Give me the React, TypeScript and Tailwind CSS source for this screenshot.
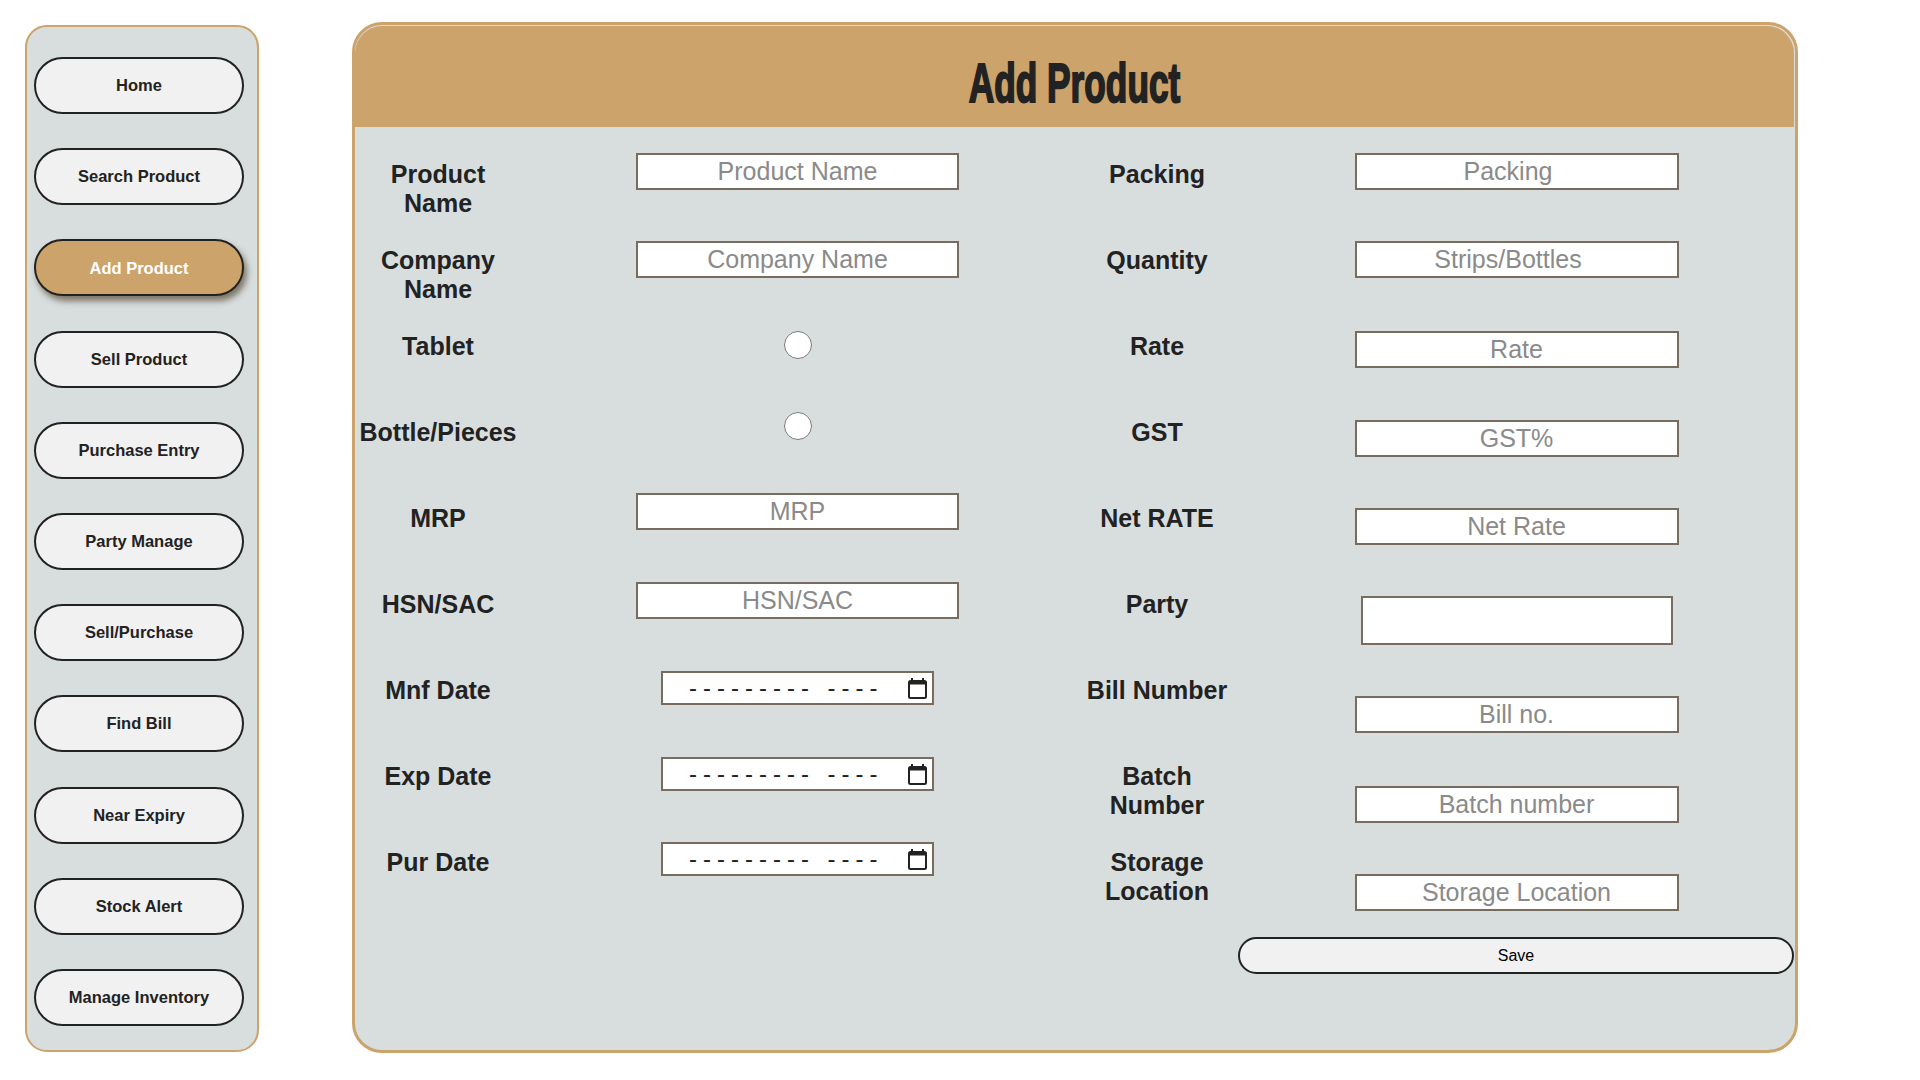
import React from 'react'

const navItems = [
  'Home',
  'Search Product',
  'Add Product',
  'Sell Product',
  'Purchase Entry',
  'Party Manage',
  'Sell/Purchase',
  'Find Bill',
  'Near Expiry',
  'Stock Alert',
  'Manage Inventory',
]

type Field =
  | { kind: 'text'; placeholder: string; mt: string; pad?: string }
  | { kind: 'radio'; name: string; mt: string }
  | { kind: 'date'; mt: string }
  | { kind: 'party'; mt: string }

type Row = {
  left: string
  leftField: Field
  right: string
  rightField: Field
}

const rows: Row[] = [
  {
    left: 'Product Name',
    leftField: { kind: 'text', placeholder: 'Product Name', mt: 'mt-[3px]' },
    right: 'Packing',
    rightField: { kind: 'text', placeholder: 'Packing', mt: 'mt-[3px]', pad: 'pr-[17px]' },
  },
  {
    left: 'Company Name',
    leftField: { kind: 'text', placeholder: 'Company Name', mt: 'mt-[5px]' },
    right: 'Quantity',
    rightField: { kind: 'text', placeholder: 'Strips/Bottles', mt: 'mt-[5px]', pad: 'pr-[17px]' },
  },
  {
    left: 'Tablet',
    leftField: { kind: 'radio', name: 'tablet', mt: 'mt-[9px]' },
    right: 'Rate',
    rightField: { kind: 'text', placeholder: 'Rate', mt: 'mt-[9px]' },
  },
  {
    left: 'Bottle/Pieces',
    leftField: { kind: 'radio', name: 'bottle', mt: 'mt-[4px]' },
    right: 'GST',
    rightField: { kind: 'text', placeholder: 'GST%', mt: 'mt-[12px]' },
  },
  {
    left: 'MRP',
    leftField: { kind: 'text', placeholder: 'MRP', mt: '-mt-[1px]' },
    right: 'Net RATE',
    rightField: { kind: 'text', placeholder: 'Net Rate', mt: 'mt-[14px]' },
  },
  {
    left: 'HSN/SAC',
    leftField: { kind: 'text', placeholder: 'HSN/SAC', mt: 'mt-[2px]' },
    right: 'Party',
    rightField: { kind: 'party', mt: 'mt-[16px]' },
  },
  {
    left: 'Mnf Date',
    leftField: { kind: 'date', mt: 'mt-[5px]' },
    right: 'Bill Number',
    rightField: { kind: 'text', placeholder: 'Bill no.', mt: 'mt-[30px]' },
  },
  {
    left: 'Exp Date',
    leftField: { kind: 'date', mt: 'mt-[5px]' },
    right: 'Batch Number',
    rightField: { kind: 'text', placeholder: 'Batch number', mt: 'mt-[34px]' },
  },
  {
    left: 'Pur Date',
    leftField: { kind: 'date', mt: 'mt-[4px]' },
    right: 'Storage Location',
    rightField: { kind: 'text', placeholder: 'Storage Location', mt: 'mt-[36px]' },
  },
]

const CalendarIcon = () => (
  <svg width="19" height="21" viewBox="0 0 19 21" fill="none">
    <rect x="3" y="0" width="2" height="4" fill="#222" />
    <rect x="14" y="0" width="2" height="4" fill="#222" />
    <rect x="1" y="3" width="17" height="17" rx="1.5" stroke="#222" strokeWidth="2" />
    <rect x="1" y="3" width="17" height="3.5" fill="#222" />
  </svg>
)

const FieldCell = ({ field, width }: { field: Field; width: string }) => {
  if (field.kind === 'radio') {
    return (
      <div className={`flex justify-center ${field.mt}`}>
        <input type="radio" name={field.name} className="w-[28px] h-[28px] m-0" />
      </div>
    )
  }
  if (field.kind === 'date') {
    return (
      <div
        className={`mx-auto flex items-center w-[273px] h-[34px] border-2 border-[#776c5d] bg-white pl-[26px] pr-[5px] ${field.mt}`}
      >
        <span className="flex-1 text-[24px] leading-none tracking-[6px] text-[#222] whitespace-pre">
          --------- ----
        </span>
        <CalendarIcon />
      </div>
    )
  }
  if (field.kind === 'party') {
    return (
      <div className={`flex justify-center ${field.mt}`}>
        <input
          type="text"
          className="w-[312px] h-[49px] border-2 border-[#776c5d] bg-white outline-none"
        />
      </div>
    )
  }
  return (
    <div className={`flex justify-center ${field.mt}`}>
      <input
        type="text"
        placeholder={field.placeholder}
        className={`${width} ${field.pad ?? ''} h-[37px] border-2 border-[#776c5d] bg-white text-center text-[25px] leading-none outline-none placeholder:text-[#8a8a8a]`}
      />
    </div>
  )
}

const Label = ({ text }: { text: string }) => (
  <div className="mt-[10px] text-center text-[25px] leading-[29px] font-bold text-[#222]">{text}</div>
)

export default function App() {
  return (
    <div className="h-screen overflow-y-scroll bg-white">
      <div className="min-h-[1100px] flex items-start font-['Liberation_Sans',Arial,sans-serif]">
        <aside className="ml-[25px] mt-[25px] w-[234px] h-[1027px] shrink-0 rounded-[22px] border-2 border-[#cca36a] bg-[#d8dede] pt-[30px] pl-[7px] flex flex-col gap-[34.2px]">
          {navItems.map((item) => {
            const active = item === 'Add Product'
            return (
              <button
                key={item}
                className={
                  active
                    ? 'w-[210px] h-[57px] shrink-0 rounded-full border-[2.5px] border-[#222] bg-[#cca36a] text-white text-[16.5px] font-bold shadow-[3px_5px_6px_rgba(60,45,20,0.6)]'
                    : 'w-[210px] h-[57px] shrink-0 rounded-full border-[2.5px] border-[#222] bg-[#f1f1f1] text-[#222] text-[16.5px] font-bold'
                }
              >
                {item}
              </button>
            )
          })}
        </aside>

        <main className="ml-[93px] mt-[22px] w-[1446px] h-[1031px] shrink-0 rounded-[30px] border-[3px] border-[#cca36a] bg-[#d8dede] overflow-hidden">
          <div className="mt-[1px] mr-[1px] h-[101px] rounded-t-[27px] bg-[#cca36a] pt-[29px]">
            <div className="text-center text-[56px] leading-[56px] font-bold text-[#222] scale-x-[0.63] [-webkit-text-stroke:2px_#222]">
              Add Product
            </div>
          </div>

          <div className="pt-[23px] pl-[2px] grid grid-cols-[162px_557px_162px_557px] auto-rows-[86px]">
            {rows.map((row) => (
              <React.Fragment key={row.left}>
                <Label text={row.left} />
                <FieldCell field={row.leftField} width="w-[323px]" />
                <Label text={row.right} />
                <FieldCell field={row.rightField} width="w-[324px]" />
              </React.Fragment>
            ))}
            <div className="col-start-4">
              <button className="mt-[13px] w-[556px] h-[37px] rounded-full border-2 border-[#222] bg-[#f1f1f1] text-[16px] text-black">
                Save
              </button>
            </div>
          </div>
        </main>
      </div>
    </div>
  )
}
